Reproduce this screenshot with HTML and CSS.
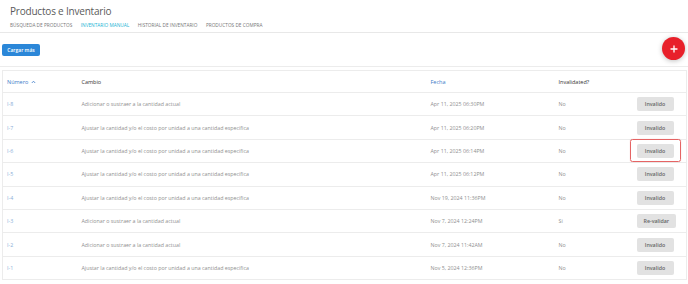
FILE: index.html
```html
<!DOCTYPE html>
<html lang="es">
<head>
    <meta charset="UTF-8">
    <meta name="viewport" content="width=device-width, initial-scale=1.0">
    <title>Productos e Inventario</title>
    <link rel="stylesheet" href="styles.css">
</head>
<body>
    <div class="page-header">
        <h1 class="title">Productos e Inventario</h1>
        <nav class="tabs">
            <a class="tab">BÚSQUEDA DE PRODUCTOS</a>
            <a class="tab active">INVENTARIO MANUAL</a>
            <a class="tab">HISTORIAL DE INVENTARIO</a>
            <a class="tab">PRODUCTOS DE COMPRA</a>
        </nav>
    </div>

    <div class="toolbar">
        <button class="load-more">Cargar más</button>
        <button class="fab" aria-label="Agregar">
            <svg width="8" height="8" viewBox="0 0 8 8"><path d="M4 1v6M1 4h6" stroke="#fff" stroke-width="1.3" stroke-linecap="round"/></svg>
        </button>
    </div>

    <table class="inventory">
        <colgroup>
            <col class="c-num">
            <col class="c-change">
            <col class="c-date">
            <col class="c-inv">
            <col class="c-action">
        </colgroup>
        <thead>
            <tr>
                <th class="sortable">Número
                    <svg class="caret" width="5" height="4" viewBox="0 0 5 4"><path d="M0.8 3L2.5 1.2 4.2 3" fill="none" stroke="#3b7bc8" stroke-width="0.8"/></svg>
                </th>
                <th>Cambio</th>
                <th class="sortable">Fecha</th>
                <th>Invalidated?</th>
                <th></th>
            </tr>
        </thead>
        <tbody>
            <tr>
                <td class="id">I-8</td>
                <td>Adicionar o sustraer a la cantidad actual</td>
                <td>Apr 11, 2025 06:30PM</td>
                <td>No</td>
                <td><button class="btn-gray">Invalido</button></td>
            </tr>
            <tr>
                <td class="id">I-7</td>
                <td>Ajustar la cantidad y/o el costo por unidad a una cantidad especifica</td>
                <td>Apr 11, 2025 06:20PM</td>
                <td>No</td>
                <td><button class="btn-gray">Invalido</button></td>
            </tr>
            <tr>
                <td class="id">I-6</td>
                <td>Ajustar la cantidad y/o el costo por unidad a una cantidad especifica</td>
                <td>Apr 11, 2025 06:14PM</td>
                <td>No</td>
                <td><span class="highlight"><button class="btn-gray">Invalido</button></span></td>
            </tr>
            <tr>
                <td class="id">I-5</td>
                <td>Ajustar la cantidad y/o el costo por unidad a una cantidad especifica</td>
                <td>Apr 11, 2025 06:12PM</td>
                <td>No</td>
                <td><button class="btn-gray">Invalido</button></td>
            </tr>
            <tr>
                <td class="id">I-4</td>
                <td>Ajustar la cantidad y/o el costo por unidad a una cantidad especifica</td>
                <td>Nov 19, 2024 11:36PM</td>
                <td>No</td>
                <td><button class="btn-gray">Invalido</button></td>
            </tr>
            <tr>
                <td class="id">I-3</td>
                <td>Adicionar o sustraer a la cantidad actual</td>
                <td>Nov 7, 2024 12:24PM</td>
                <td>Si</td>
                <td><button class="btn-gray">Re-validar</button></td>
            </tr>
            <tr>
                <td class="id">I-2</td>
                <td>Adicionar o sustraer a la cantidad actual</td>
                <td>Nov 7, 2024 11:42AM</td>
                <td>No</td>
                <td><button class="btn-gray">Invalido</button></td>
            </tr>
            <tr>
                <td class="id">I-1</td>
                <td>Ajustar la cantidad y/o el costo por unidad a una cantidad especifica</td>
                <td>Nov 5, 2024 12:36PM</td>
                <td>No</td>
                <td><button class="btn-gray">Invalido</button></td>
            </tr>
        </tbody>
    </table>
</body>
</html>
```

FILE: styles.css
```css
* {
    box-sizing: border-box;
    margin: 0;
    padding: 0;
}

body {
    font-family: "Open Sans", Arial, sans-serif;
    background-color: #fff;
    color: #888;
    width: 688px;
}

.page-header {
    padding: 4px 10px 0;
    border-bottom: 1px solid #e8e8e8;
    height: 33px;
}

.title {
    font-size: 10px;
    font-weight: 400;
    color: #5a5a5a;
    line-height: 14px;
    letter-spacing: -0.2px;
}

.tabs {
    display: flex;
    gap: 8.5px;
    margin-top: 3px;
}

.tab {
    font-size: 4.75px;
    color: #777;
    line-height: 8px;
}

.tab.active {
    color: #22b3d4;
}

.toolbar {
    position: relative;
    height: 34px;
    padding-left: 2px;
    display: flex;
    align-items: center;
    border-bottom: 1px solid #ececec;
}

.load-more {
    background-color: #2b87d8;
    color: #fff;
    border: none;
    border-radius: 2px;
    font-family: inherit;
    font-size: 5px;
    font-weight: 600;
    width: 38px;
    height: 12px;
    margin-top: 1px;
}

.fab {
    position: absolute;
    right: 3px;
    top: 4px;
    width: 23px;
    height: 23px;
    border-radius: 50%;
    border: none;
    background-color: #e8202a;
    box-shadow: 0 1px 5px rgba(0, 0, 0, 0.25);
    display: flex;
    align-items: center;
    justify-content: center;
}

.inventory {
    margin: 3px 2px 0;
    width: 684px;
    table-layout: fixed;
    border-collapse: collapse;
    border: 1px solid #ececec;
}

.c-num { width: 75px; }
.c-change { width: 349px; }
.c-date { width: 128px; }
.c-inv { width: 78px; }
.c-action { width: 54px; }

.inventory th {
    height: 22px;
    text-align: left;
    font-size: 5.5px;
    font-weight: 400;
    color: #333;
    padding-left: 4px;
}

.inventory th.sortable {
    color: #3b7bc8;
}

.caret {
    vertical-align: middle;
    margin-left: 1px;
}

.inventory td {
    height: 23.4px;
    border-top: 1px solid #ececec;
    font-size: 5.3px;
    color: #8f8f8f;
    padding-left: 4px;
}

.inventory td.id {
    color: #8aaed8;
}

.btn-gray {
    background-color: #e2e2e2;
    color: #666;
    border: none;
    border-radius: 2px;
    font-family: inherit;
    font-size: 5.3px;
    font-weight: 600;
    height: 14px;
    padding: 0 7px;
    min-width: 37px;
}

.highlight {
    display: inline-block;
    border: 1.2px solid #e56464;
    border-radius: 2.5px;
    box-shadow: 0 0 1px rgba(229, 100, 100, 0.5);
    padding: 3.5px 6px 3.5px 6px;
    margin: -5px -1px -5px -7px;
}

.highlight .btn-gray {
    display: block;
}
```
